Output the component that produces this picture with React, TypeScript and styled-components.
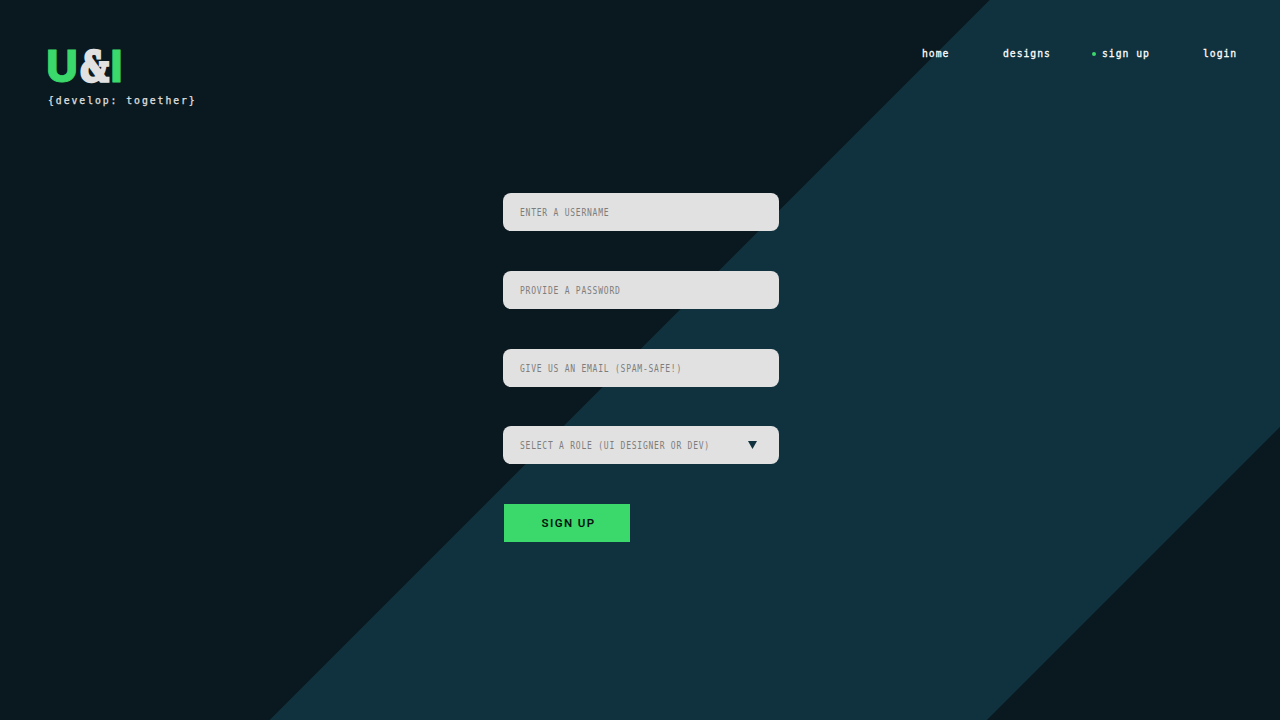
import React from "react";
import styled, { createGlobalStyle } from "styled-components";

const GlobalStyle = createGlobalStyle`
  * { box-sizing: border-box; }
  body { margin: 0; background: #0a191f; overflow: hidden; }
`;

const Page = styled.main`
  height: 720px;
  background: linear-gradient(
    135deg,
    #0a191f 0 699.5px,
    #10323e 700.2px 1206.6px,
    #0a191f 1207.3px
  );
`;

const Header = styled.header`
  display: flex;
  justify-content: space-between;
  align-items: flex-start;
  height: 193px;
  padding: 46px 42px 0 48px;
`;

const Logo = styled.div`
  display: flex;
  height: 47px;
  align-items: flex-start;
`;

const Glyph = styled.span<{ $w: number; $sx: number; $shift: number }>`
  display: block;
  width: ${(p) => p.$w}px;
  text-indent: ${(p) => p.$shift}px;
  color: #3bd86b;
  font: 800 44px/41px Inter, sans-serif;
  -webkit-text-stroke: 0.9px #3bd86b;
  transform: scaleX(${(p) => p.$sx});
  transform-origin: left;
  white-space: nowrap;
`;

const Ampersand = styled(Glyph)`
  color: #e1e1e1;
  font: 700 41px/43px "DejaVu Serif", serif;
  -webkit-text-stroke: 3.4px #e1e1e1;
`;

const Mono = styled.span<{ $size: number; $spacing: number; $scale: number }>`
  display: block;
  width: max-content;
  font-family: "DejaVu Sans Mono", monospace;
  font-size: ${(p) => p.$size}px;
  line-height: 16px;
  letter-spacing: ${(p) => p.$spacing}px;
  transform: scaleX(${(p) => p.$scale});
  transform-origin: left;
  white-space: pre;
`;

const Tagline = styled(Mono)`
  color: #e1e1e1;
  -webkit-text-stroke: 0.25px #e1e1e1;
`;

const Nav = styled.nav`
  display: flex;
  gap: 54px;
`;

const NavLink = styled.a<{ $w: number; $active?: boolean }>`
  position: relative;
  width: ${(p) => p.$w}px;
  color: #fff;
  -webkit-text-stroke: 0.3px #fff;
  &::before {
    content: "";
    display: ${(p) => (p.$active ? "block" : "none")};
    position: absolute;
    left: -10px;
    top: 6px;
    width: 4px;
    height: 4px;
    border-radius: 50%;
    background: #3bd86b;
  }
`;

const Form = styled.form`
  display: flex;
  flex-direction: column;
  width: 276px;
  margin-left: 503px;
`;

const Field = styled.div<{ $gap?: number }>`
  display: flex;
  align-items: center;
  justify-content: space-between;
  height: 38px;
  margin-bottom: ${(p) => p.$gap ?? 40}px;
  padding: 0 22px 0 17px;
  border-radius: 8px;
  background: #e1e1e1;
  color: #7d7d7d;
`;

const Label = styled.div`
  width: 200px;
`;

const Arrow = styled.svg`
  width: 9px;
  height: 8px;
  fill: #10323e;
`;

const Submit = styled.button`
  width: 126px;
  height: 38px;
  margin-left: 1px;
  padding: 0 0 0 3px;
  border: 0;
  background: #3bd86b;
  color: #06140f;
  font: 600 11.5px Roboto, sans-serif;
  letter-spacing: 1.4px;
`;

const links = [
  { label: "home", width: 27 },
  { label: "designs", width: 45 },
  { label: "sign up", width: 47 },
  { label: "login", width: 35 },
];

const fields = ["ENTER A USERNAME", "PROVIDE A PASSWORD", "GIVE US AN EMAIL (SPAM-SAFE!)"];

export default function App() {
  return (
    <>
      <GlobalStyle />
      <Page>
        <Header>
          <div>
            <Logo>
              <Glyph $w={32} $sx={1.0} $shift={-2}>U</Glyph>
              <Ampersand $w={32} $sx={0.76} $shift={0.6}>&amp;</Ampersand>
              <Glyph $w={11} $sx={0.95} $shift={-1.6}>I</Glyph>
            </Logo>
            <Tagline $size={11} $spacing={2.2} $scale={0.887}>{"{develop: together}"}</Tagline>
          </div>
          <Nav>
            {links.map((l) => (
              <NavLink key={l.label} $w={l.width} $active={l.label === "sign up"}>
                <Mono $size={11} $spacing={1.1} $scale={0.885}>{l.label}</Mono>
              </NavLink>
            ))}
          </Nav>
        </Header>
        <Form>
          {fields.map((f, i) => (
            <Field key={f} $gap={i === 2 ? 39 : 40}>
              <Label><Mono $size={10.5} $spacing={1} $scale={0.763}>{f}</Mono></Label>
            </Field>
          ))}
          <Field>
            <Label><Mono $size={10.5} $spacing={1} $scale={0.763}>SELECT A ROLE (UI DESIGNER OR DEV)</Mono></Label>
            <Arrow viewBox="0 0 9 8"><path d="M0 0H9L4.5 8Z" /></Arrow>
          </Field>
          <Submit type="button">SIGN UP</Submit>
        </Form>
      </Page>
    </>
  );
}
